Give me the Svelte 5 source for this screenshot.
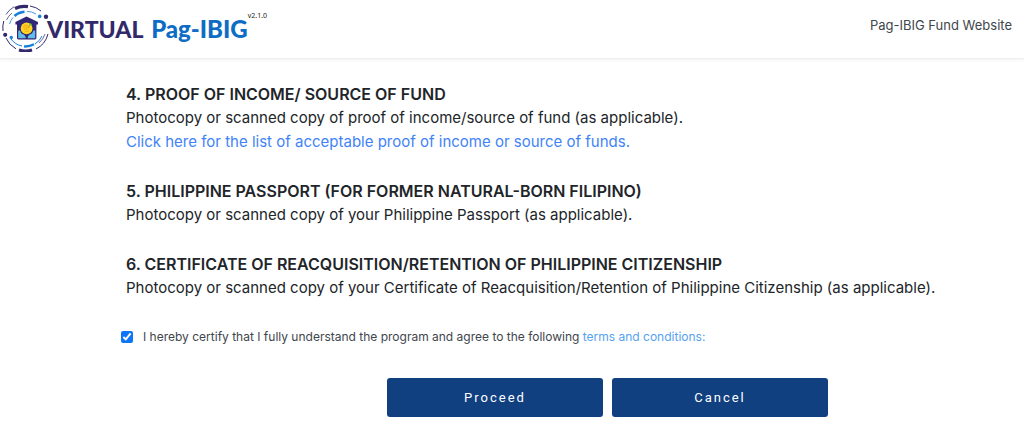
<script>
  let agreed = $state(true);

  const requirements = [
    {
      title: '4. PROOF OF INCOME/ SOURCE OF FUND',
      text: 'Photocopy or scanned copy of proof of income/source of fund (as applicable).',
      link: 'Click here for the list of acceptable proof of income or source of funds.'
    },
    {
      title: '5. PHILIPPINE PASSPORT (FOR FORMER NATURAL-BORN FILIPINO)',
      text: 'Photocopy or scanned copy of your Philippine Passport (as applicable).'
    },
    {
      title: '6. CERTIFICATE OF REACQUISITION/RETENTION OF PHILIPPINE CITIZENSHIP',
      text: 'Photocopy or scanned copy of your Certificate of Reacquisition/Retention of Philippine Citizenship (as applicable).'
    }
  ];
</script>

<header class="navbar">
  <a class="brand" href="#home" aria-label="Virtual Pag-IBIG">
    <svg class="emblem" viewBox="0 0 50 50" aria-hidden="true">
      <g fill="none" stroke="#32296b">
        <path d="M15 6.5 A21.5 21.5 0 0 1 28 4.7" stroke-width="3.4" />
        <path d="M19 48 A22 22 0 0 0 32 48" stroke-width="3" />
        <path d="M30 4 A22.5 22.5 0 0 1 41 9" stroke-width="1" />
        <path d="M14 4.8 A23.5 23.5 0 0 0 6 12.5" stroke-width=".8" />
        <path d="M3.8 19 A22.5 22.5 0 0 0 3 29" stroke-width="1" />
        <path d="M6 36 A22.5 22.5 0 0 0 16 46.8" stroke-width="1" />
        <path d="M48 32 A23 23 0 0 1 36 47" stroke-width="1" />
        <path d="M45 32 A20 20 0 0 1 39 41" stroke-width=".7" />
        <path d="M6.5 18 A20 20 0 0 1 12 11" stroke-width=".7" />
      </g>
      <g fill="none" stroke="#1581dc">
        <path d="M14.5 14 A17 17 0 0 1 24.5 9.8" stroke-width="2.6" />
        <path d="M24 44.4 A18 18 0 0 0 34 42.2" stroke-width="2.4" />
        <path d="M27 9.4 A17.5 17.5 0 0 1 36 12" stroke-width=".8" />
        <path d="M9.5 22 A17.5 17.5 0 0 1 13 15.5" stroke-width=".8" />
        <path d="M11 37 A17.5 17.5 0 0 0 22 44" stroke-width="1" />
        <path d="M42 34 A17.5 17.5 0 0 1 35 42" stroke-width="1" />
      </g>
      <circle cx="46" cy="14.8" r="2.2" fill="#32296b" />
      <circle cx="5.2" cy="32.8" r="2.1" fill="#32296b" />
      <circle cx="39.7" cy="14.4" r="1.8" fill="#1581dc" />
      <circle cx="11.3" cy="35.4" r="1.7" fill="#1581dc" />
      <path d="M26.5 14.4 L38 20 V22.6 H36.4 V36 Q36.4 37.4 35 37.4 H18.4 Q17 37.4 17 36 V22.6 H15.4 V20 Z" fill="#302775" />
      <path d="M18.2 29 Q19.2 27.6 20.2 29 L21.4 31.6 Q25.6 32.6 25.8 36.2 H18.2 Z M35.2 29 Q34.2 27.6 33.2 29 L32 31.6 Q27.8 32.6 27.6 36.2 H35.2 Z" fill="#62bde9" />
      <circle cx="26.6" cy="26.4" r="5.9" fill="#ffd51f" />
      <path d="M24 23.2 H27.5 Q30.5 25 27.5 27 H24 M23 25 H30 M25 29.2 H29" fill="none" stroke="#f0a024" stroke-width=".8" />
      <path d="M29 21.6 H31.4 V24 H29 Z" fill="#83c44d" />
    </svg>
    <span class="wordmark"><span class="virtual">VIRTUAL</span> <span>Pag-IBIG</span></span>
    <span class="version">v2.1.0</span>
  </a>
  <a class="site-link" href="#website">Pag-IBIG Fund Website</a>
</header>

<main>
  {#each requirements as item (item.title)}
    <section>
      <h2>{item.title}</h2>
      <p>{item.text}</p>
      {#if item.link}
        <p><a href="#list">{item.link}</a></p>
      {/if}
    </section>
  {/each}

  <div class="certify">
    <input id="certify" type="checkbox" bind:checked={agreed} />
    <label for="certify">I hereby certify that I fully understand the program and agree to the following <a href="#terms">terms and conditions:</a></label>
  </div>

  <div class="actions">
    <button type="button">Proceed</button>
    <button type="button">Cancel</button>
  </div>
</main>

<style>
  :global(body) {
    margin: 0;
    background: #fff;
    color: #212529;
    font-family: Inter, "Liberation Sans", sans-serif;
    font-size: 15px;
    line-height: 24px;
  }

  a {
    text-decoration: none;
  }

  .navbar {
    display: flex;
    align-items: center;
    justify-content: space-between;
    height: 58px;
    padding-right: 12px;
    border-bottom: 1px solid #f0f0f0;
    box-shadow: 0 1px 3px rgba(0, 0, 0, .06);
  }

  .brand {
    display: flex;
    align-items: center;
    color: #0d6cc4;
  }

  .emblem {
    width: 50px;
    height: 50px;
    margin: 0 -3px 4px 0;
  }

  .wordmark {
    font-family: Lato, sans-serif;
    font-size: 24px;
    font-weight: 900;
    white-space: nowrap;
  }

  .virtual {
    font-size: 23px;
    margin-right: 2px;
    color: #32296b;
  }

  .version {
    align-self: flex-start;
    padding-top: 10px;
    font-family: "Noto Sans", sans-serif;
    font-size: 7px;
    line-height: 8px;
    color: #222;
  }

  .site-link {
    margin-bottom: 8px;
    font-size: 13px;
    line-height: 20px;
    color: #40464c;
  }

  main {
    padding: 23px 48px 20px 121px;
  }

  section {
    margin-bottom: 25px;
    padding-left: 5px;
  }

  h2,
  p {
    margin: 0;
  }

  h2 {
    font-size: 16px;
    font-weight: 600;
  }

  section a {
    color: #3f83f8;
  }

  .certify {
    display: flex;
    align-items: center;
    gap: 10px;
    margin-top: 27px;
    font-size: 12px;
    line-height: 20px;
    color: #40464c;
  }

  .certify input {
    width: 12px;
    height: 12px;
    margin: 0;
    accent-color: #0d75f8;
  }

  .certify a {
    color: #55a2ef;
  }

  .actions {
    display: flex;
    gap: 9px;
    margin-top: 31px;
    padding-left: 266px;
  }

  button {
    flex: 0 1 216px;
    height: 39px;
    padding: 0;
    border: 0;
    border-radius: 3px;
    background: #104080;
    color: #fff;
    font-family: Roboto, sans-serif;
    font-size: 13px;
    letter-spacing: 2px;
    cursor: pointer;
  }
</style>
